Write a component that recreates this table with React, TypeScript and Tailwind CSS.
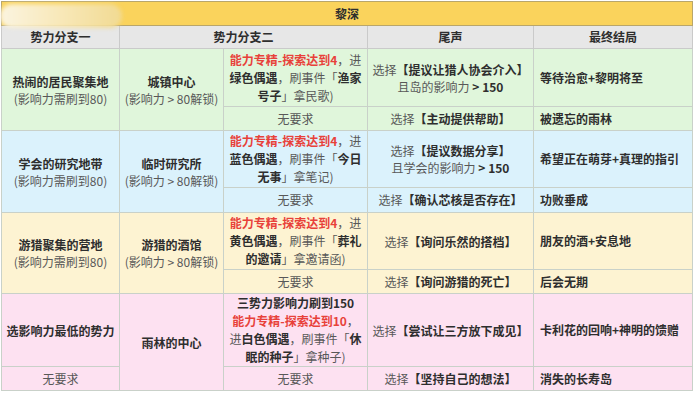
import type { ReactNode } from 'react'

const G = ({ children }: { children: ReactNode }) => <span className="font-normal text-[#585858]">{children}</span>
const R = ({ children }: { children: ReactNode }) => <span className="text-[#e8413a]">{children}</span>

const cell = 'border border-[#c9d1c9] px-1 text-center align-middle'

type GroupProps = {
  bg: string
  h1: string
  h2: string
  one: ReactNode
  oneSub?: ReactNode
  two: ReactNode
  cond: ReactNode
  end: ReactNode
  result: string
  altEnd: string
  altResult: string
}

function Pick({ text }: { text: string }) {
  return (
    <>
      <G>选择</G>【{text}】
    </>
  )
}

function Group({ bg, h1, h2, one, oneSub, two, cond, end, result, altEnd, altResult }: GroupProps) {
  return (
    <>
      <tr className={`${bg} ${h1}`}>
        <td rowSpan={oneSub ? 1 : 2} className={`${cell} leading-[17px]`}>{one}</td>
        <td rowSpan={2} className={`${cell} leading-[17px]`}>{two}</td>
        <td className={`${cell} leading-[18px] whitespace-nowrap`}>{cond}</td>
        <td className={`${cell} leading-[17px] whitespace-nowrap`}>{end}</td>
        <td className={`${cell} text-left pl-[6px]`}>{result}</td>
      </tr>
      <tr className={`${bg} ${h2}`}>
        {oneSub && <td className={cell}>{oneSub}</td>}
        <td className={cell}><G>无要求</G></td>
        <td className={`${cell} whitespace-nowrap`}><Pick text={altEnd} /></td>
        <td className={`${cell} text-left pl-[6px]`}>{altResult}</td>
      </tr>
    </>
  )
}

const need = <G>(影响力需刷到80)</G>
const unlock = <G>(影响力 &gt; 80解锁)</G>

export default function App() {
  return (
    <div className="relative w-[693px] h-[396px] bg-white font-['Noto_Sans_CJK_SC','Liberation_Sans',sans-serif] text-[12px] font-bold text-[#2e2e2e]">
      <table className="mt-px ml-px w-[691px] table-fixed border border-[#7f7f7f]">
        <colgroup>
          <col className="w-[118px]" />
          <col className="w-[104px]" />
          <col className="w-[144px]" />
          <col className="w-[166px]" />
          <col className="w-[159px]" />
        </colgroup>
        <tbody>
          <tr className="h-[24px] bg-[#fad35c]">
            <td colSpan={5} className="border border-[#b9a66a] text-center">黎深</td>
          </tr>
          <tr className="h-[23px] bg-[#e7e7e7]">
            <td className="border border-[#cacaca] text-center">势力分支一</td>
            <td colSpan={2} className="border border-[#cacaca] text-center">势力分支二</td>
            <td className="border border-[#cacaca] text-center">尾声</td>
            <td className="border border-[#cacaca] text-center">最终结局</td>
          </tr>
          <Group
            bg="bg-[#e0f6db]"
            h1="h-[58px]"
            h2="h-[24px]"
            one={<>热闹的居民聚集地<br />{need}</>}
            two={<>城镇中心<br />{unlock}</>}
            cond={<><R>能力专精-探索达到4</R><G>，进</G><br />绿色偶遇<G>，刷事件「</G>渔家<br />号子<G>」拿民歌)</G></>}
            end={<><Pick text="提议让猎人协会介入" /><br /><G>且岛的影响力</G> &gt; 150</>}
            result="等待治愈+黎明将至"
            altEnd="主动提供帮助"
            altResult="被遗忘的雨林"
          />
          <Group
            bg="bg-[#dbf2fc]"
            h1="h-[57px]"
            h2="h-[25px]"
            one={<>学会的研究地带<br />{need}</>}
            two={<>临时研究所<br />{unlock}</>}
            cond={<><R>能力专精-探索达到4</R><G>，进</G><br />蓝色偶遇<G>，刷事件「</G>今日<br />无事<G>」拿笔记)</G></>}
            end={<><Pick text="提议数据分享" /><br /><G>且学会的影响力</G> &gt; 150</>}
            result="希望正在萌芽+真理的指引"
            altEnd="确认芯核是否存在"
            altResult="功败垂成"
          />
          <Group
            bg="bg-[#fdf3d2]"
            h1="h-[57px]"
            h2="h-[24px]"
            one={<>游猎聚集的营地<br />{need}</>}
            two={<>游猎的酒馆<br />{unlock}</>}
            cond={<><R>能力专精-探索达到4</R><G>，进</G><br />黄色偶遇<G>，刷事件「</G>葬礼<br />的邀请<G>」拿邀请函)</G></>}
            end={<Pick text="询问乐然的搭档" />}
            result="朋友的酒+安息地"
            altEnd="询问游猎的死亡"
            altResult="后会无期"
          />
          <Group
            bg="bg-[#fde1f1]"
            h1="h-[73px]"
            h2="h-[24px]"
            one="选影响力最低的势力"
            oneSub={<G>无要求</G>}
            two="雨林的中心"
            cond={<>三势力影响力刷到150<br /><R>能力专精-探索达到10</R><G>，</G><br /><G>进</G>白色偶遇<G>，刷事件「</G>休<br />眠的种子<G>」拿种子)</G></>}
            end={<Pick text="尝试让三方放下成见" />}
            result="卡利花的回响+神明的馈赠"
            altEnd="坚持自己的想法"
            altResult="消失的长寿岛"
          />
        </tbody>
      </table>
      <div className="absolute left-0 top-[3px] h-[24px] w-[122px] rounded-[12px] bg-gradient-to-r from-[#fbf4e0] via-[#f8e8b8] to-[#f1da92] blur-[2px]" />
    </div>
  )
}
